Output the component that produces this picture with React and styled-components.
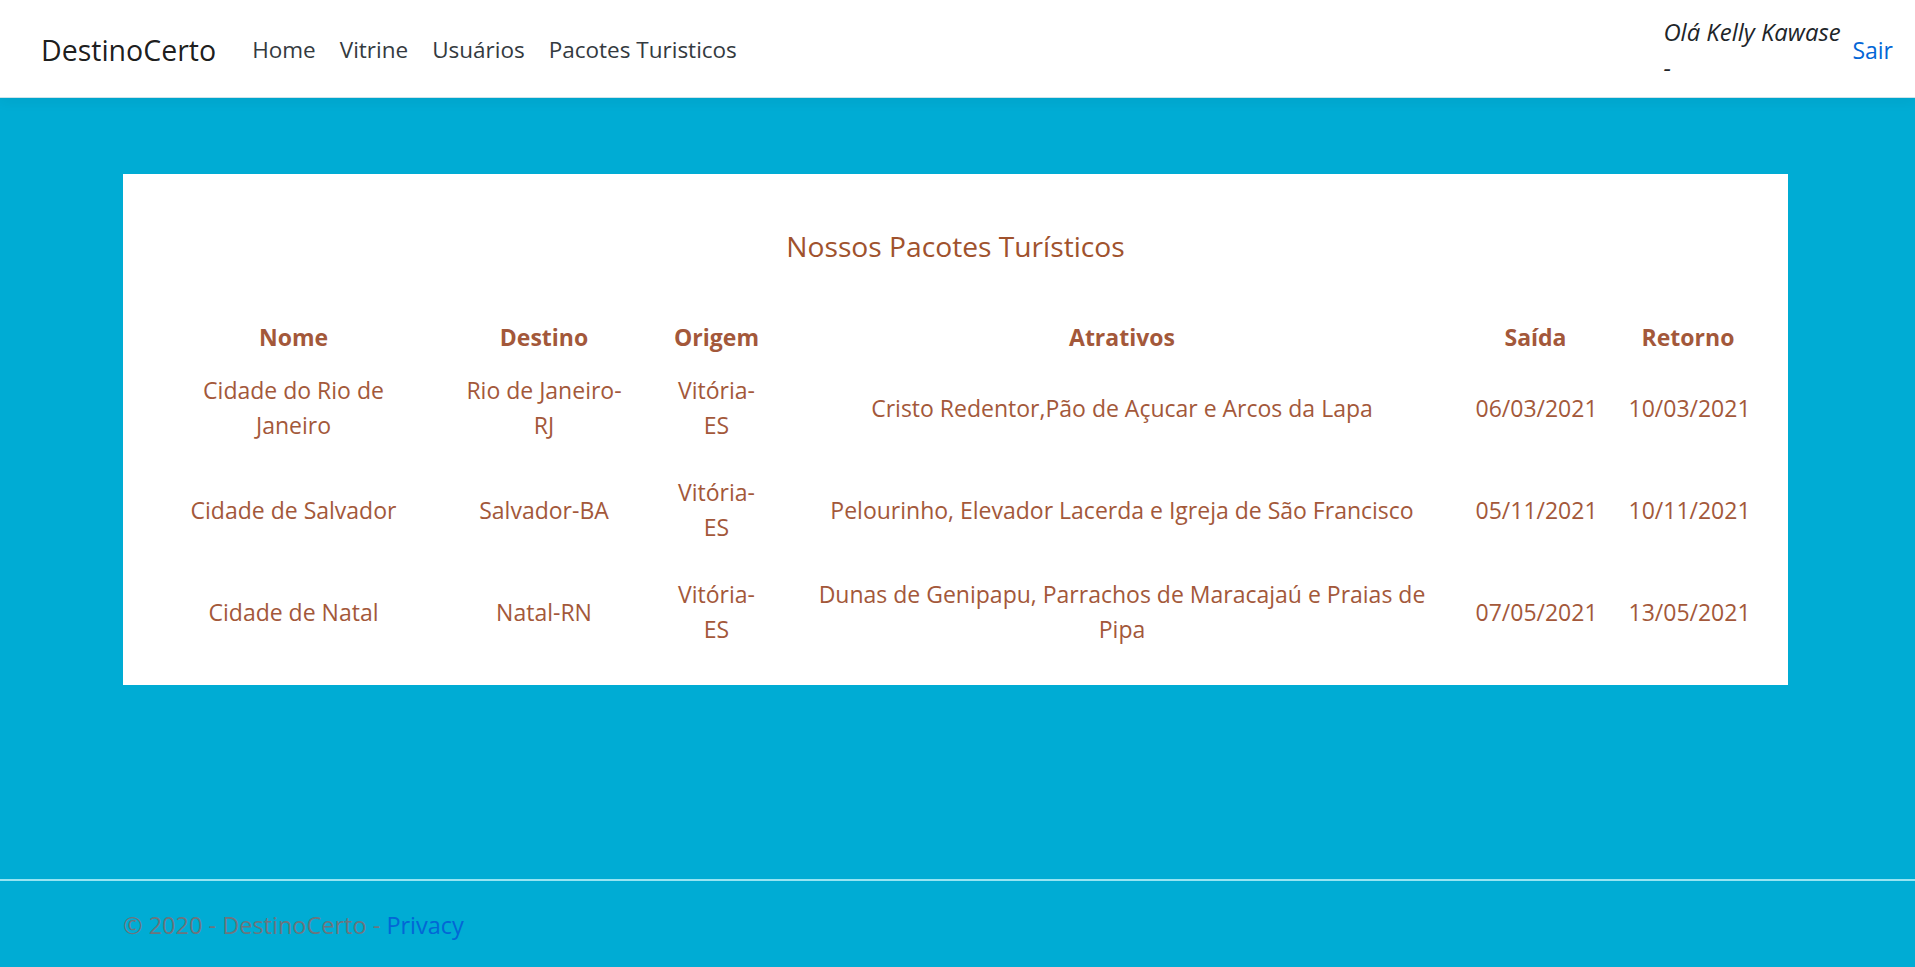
import React from 'react';
import styled, { createGlobalStyle } from 'styled-components';

const packages = [
  {
    name: 'Cidade do Rio de Janeiro',
    destination: 'Rio de Janeiro-RJ',
    origin: 'Vitória-ES',
    attractions: 'Cristo Redentor,Pão de Açucar e Arcos da Lapa',
    departure: '06/03/2021',
    return: '10/03/2021',
  },
  {
    name: 'Cidade de Salvador',
    destination: 'Salvador-BA',
    origin: 'Vitória-ES',
    attractions: 'Pelourinho, Elevador Lacerda e Igreja de São Francisco',
    departure: '05/11/2021',
    return: '10/11/2021',
  },
  {
    name: 'Cidade de Natal',
    destination: 'Natal-RN',
    origin: 'Vitória-ES',
    attractions: 'Dunas de Genipapu, Parrachos de Maracajaú e Praias de Pipa',
    departure: '07/05/2021',
    return: '13/05/2021',
  },
];

// label, data key, column width, horizontal cell padding
const columns = [
  ['Nome', 'name', 293, 16.5],
  ['Destino', 'destination', 208, 16.5],
  ['Origem', 'origin', 137, 22],
  ['Atrativos', 'attractions', 674, 16.5],
  ['Saída', 'departure', 153, 16.5],
  ['Retorno', 'return', 152, 16.5],
];

const navLinks = ['Home', 'Vitrine', 'Usuários', 'Pacotes Turisticos'];

export default function App() {
  return (
    <>
      <GlobalStyle />
      <Page>
        <Header>
          <Brand href="#">DestinoCerto</Brand>
          <NavList>
            {navLinks.map(label => (
              <NavItem key={label}>
                <NavLink href="#">{label}</NavLink>
              </NavItem>
            ))}
          </NavList>
          <UserArea>
            <Greeting>Olá Kelly Kawase -</Greeting>
            <Logout href="#">Sair</Logout>
          </UserArea>
        </Header>

        <Main>
          <Container>
            <Card>
              <Title>Nossos Pacotes Turísticos</Title>
              <Table>
                <colgroup>
                  {columns.map(([label, , width]) => (
                    <Col key={label} $w={width} />
                  ))}
                </colgroup>
                <thead>
                  <tr>
                    {columns.map(([label, , , pad]) => (
                      <Th key={label} $pad={pad}>
                        {label}
                      </Th>
                    ))}
                  </tr>
                </thead>
                <tbody>
                  {packages.map(p => (
                    <tr key={p.name}>
                      {columns.map(([label, key, , pad]) => (
                        <Td key={label} $pad={pad}>
                          {p[key]}
                        </Td>
                      ))}
                    </tr>
                  ))}
                </tbody>
              </Table>
            </Card>
          </Container>
        </Main>

        <Footer>
          <Container>
            © 2020 - DestinoCerto - <FooterLink href="#">Privacy</FooterLink>
          </Container>
        </Footer>
      </Page>
    </>
  );
}

const GlobalStyle = createGlobalStyle`
  html, body {
    margin: 0;
    padding: 0;
  }
  body {
    font-family: "Open Sans", "Noto Sans", sans-serif;
    background: #00acd4;
  }
  * {
    box-sizing: border-box;
  }
`;

const Page = styled.div`
  min-height: 100vh;
  display: flex;
  flex-direction: column;
`;

const Header = styled.header`
  height: 98px;
  display: flex;
  align-items: center;
  padding: 2px 22px 0 41px;
  background: #fff;
  border-bottom: 1px solid #cfe3ea;
  box-shadow: 0 4px 12px rgba(0, 0, 0, 0.05);
`;

const Brand = styled.a`
  font-size: 28.5px;
  line-height: 36px;
  color: rgba(0, 0, 0, 0.9);
  text-decoration: none;
  margin-right: 24px;
`;

const NavList = styled.ul`
  display: flex;
  list-style: none;
  margin: 0;
  padding: 0;
`;

const NavItem = styled.li`
  display: block;
`;

const NavLink = styled.a`
  display: block;
  padding: 0 12px;
  font-size: 22.5px;
  line-height: 36px;
  color: #343a40;
  text-decoration: none;
`;

const UserArea = styled.div`
  margin-left: auto;
  display: flex;
  align-items: center;
`;

const Greeting = styled.span`
  width: 184px;
  font-size: 23.9px;
  font-style: italic;
  line-height: 36px;
  color: #212529;
`;

const Logout = styled.a`
  padding-left: 5px;
  font-size: 23px;
  line-height: 36px;
  color: #0366d6;
  text-decoration: none;
`;

const Main = styled.main`
  flex: 1;
  padding: 76px 4px 0 0;
`;

const Container = styled.div`
  width: 1665px;
  margin: 0 auto;
`;

const Card = styled.section`
  background: #fff;
  padding: 54px 24px 22px;
`;

const Title = styled.h2`
  margin: 0 0 54px;
  text-align: center;
  font-size: 28.2px;
  font-weight: 400;
  line-height: 36px;
  color: #a0522d;
`;

const Table = styled.table`
  width: 100%;
  table-layout: fixed;
  border-collapse: collapse;
  color: #a3583a;
  font-size: 23px;
  line-height: 35px;
`;

const Col = styled.col`
  width: ${p => p.$w}px;
`;

const Th = styled.th`
  padding: 2px ${p => p.$pad}px;
  font-weight: 700;
  text-align: center;
`;

const Td = styled.td`
  padding: 16px ${p => p.$pad}px;
  text-align: center;
  vertical-align: middle;
`;

const Footer = styled.footer`
  border-top: 2px solid #96e4f2;
  padding: 3px 4px 0 0;
  line-height: 83px;
  font-size: 23.5px;
  color: #6c757d;
  white-space: nowrap;
`;

const FooterLink = styled.a`
  color: #0366d6;
  text-decoration: none;
`;
